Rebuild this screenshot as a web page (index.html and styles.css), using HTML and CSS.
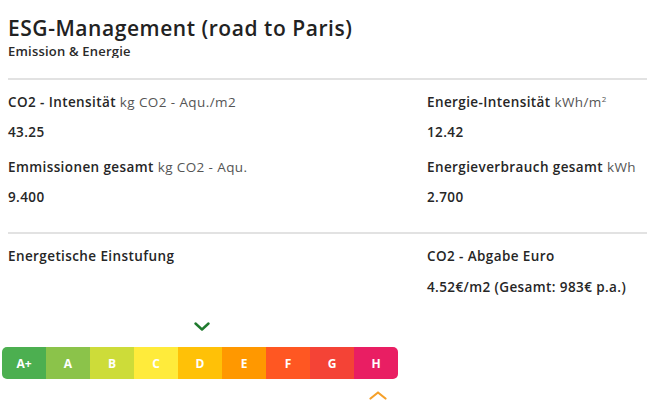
FILE: index.html
```html
<!DOCTYPE html>
<html lang="de">
<head>
<meta charset="utf-8">
<title>ESG-Management</title>
<link rel="stylesheet" href="styles.css">
</head>
<body>
<div class="card">
  <header class="head">
    <h1 class="title">ESG-Management (road to Paris)</h1>
    <div class="subtitle-clip"><h2 class="subtitle">Emission &amp; Energie</h2></div>
  </header>
  <div class="divider"></div>
  <section class="grid">
    <div class="col">
      <div class="label">CO2 - Intensität <span class="unit">kg CO2 - Aqu./m2</span></div>
      <div class="value">43.25</div>
      <div class="label">Emmissionen gesamt <span class="unit">kg CO2 - Aqu.</span></div>
      <div class="value">9.400</div>
    </div>
    <div class="col">
      <div class="label">Energie-Intensität <span class="unit">kWh/m<sup>2</sup></span></div>
      <div class="value">12.42</div>
      <div class="label">Energieverbrauch gesamt <span class="unit">kWh</span></div>
      <div class="value">2.700</div>
    </div>
  </section>
  <div class="divider divider-2"></div>
  <section class="grid grid-2">
    <div class="col">
      <div class="label">Energetische Einstufung</div>
    </div>
    <div class="col">
      <div class="label">CO2 - Abgabe Euro</div>
      <div class="value">4.52€/m2 (Gesamt: 983€ p.a.)</div>
    </div>
  </section>
  <div class="scale">
    <div class="marks marks-top">
      <span class="mark mark-d">
        <svg width="16" height="9" viewBox="0 0 16 9"><path d="M1.5 1.5 L8 7.5 L14.5 1.5" fill="none" stroke="#1f7a2e" stroke-width="2.4" stroke-linecap="round" stroke-linejoin="round"/></svg>
      </span>
    </div>
    <div class="bar">
      <span class="seg s-ap">A+</span>
      <span class="seg s-a">A</span>
      <span class="seg s-b">B</span>
      <span class="seg s-c">C</span>
      <span class="seg s-d">D</span>
      <span class="seg s-e">E</span>
      <span class="seg s-f">F</span>
      <span class="seg s-g">G</span>
      <span class="seg s-h">H</span>
    </div>
    <div class="marks marks-bottom">
      <span class="mark mark-h">
        <svg width="18" height="9" viewBox="0 0 18 9"><path d="M1.5 7.5 L9 1.5 L16.5 7.5" fill="none" stroke="#f5a02a" stroke-width="2.2" stroke-linecap="round" stroke-linejoin="round"/></svg>
      </span>
    </div>
  </div>
</div>
</body>
</html>
```

FILE: styles.css
```css
html, body {
  margin: 0;
  padding: 0;
  background: #ffffff;
}

body {
  font-family: "Open Sans", "Noto Sans", "Liberation Sans", sans-serif;
  color: #262626;
}

.card {
  width: 639px;
  padding: 15px 0 0 8px;
}

.title {
  margin: 0;
  font-size: 21px;
  font-weight: 600;
  line-height: 27px;
  color: #222;
  letter-spacing: 0.55px;
}

.subtitle-clip {
  height: 15px;
  overflow: hidden;
  margin-top: 1px;
}

.subtitle {
  margin: 0;
  font-size: 13px;
  font-weight: 600;
  line-height: 16px;
  color: #2a2a2a;
  letter-spacing: 0.2px;
}

.divider {
  height: 2px;
  background: #e2e2e2;
  margin-top: 20px;
}

.divider-2 {
  margin-top: 8px;
}

.grid {
  display: grid;
  grid-template-columns: 419px 1fr;
  padding-top: 14px;
}

.grid-2 {
  padding-top: 14px;
}

.col {
  display: flex;
  flex-direction: column;
}

.label, .value {
  font-size: 13.5px;
  font-weight: 600;
  line-height: 17px;
  color: #262626;
  white-space: nowrap;
  letter-spacing: 0.4px;
}

.label {
  margin-bottom: 13px;
}

.grid-2 .label {
  margin-bottom: 14px;
}

.value {
  margin-bottom: 18px;
}

.unit {
  font-weight: 400;
  color: #555;
}

.unit sup {
  font-size: 8px;
  line-height: 0;
}

.scale {
  margin-left: -6px;
  width: 396px;
}

.marks {
  display: grid;
  grid-template-columns: repeat(9, 44px);
}

.marks-top {
  margin-top: 8px;
  height: 25px;
  align-items: start;
}

.marks-bottom {
  align-items: start;
  padding-top: 12px;
  height: 12px;
}

.mark {
  display: flex;
  justify-content: center;
  line-height: 0;
}

.mark-d {
  grid-column: 5;
  padding-left: 3px;
}

.mark-h {
  grid-column: 9;
  padding-left: 3px;
}

.bar {
  display: grid;
  grid-template-columns: repeat(9, 44px);
  height: 32px;
  border-radius: 5px;
  overflow: hidden;
}

.seg {
  display: flex;
  align-items: center;
  justify-content: center;
  color: #fff;
  font-size: 12px;
  font-weight: 700;
}

.s-ap { background: #4caf50; }
.s-a  { background: #8bc34a; }
.s-b  { background: #cddc39; }
.s-c  { background: #ffeb3b; }
.s-d  { background: #ffc107; }
.s-e  { background: #ff9800; }
.s-f  { background: #ff5722; }
.s-g  { background: #f44336; }
.s-h  { background: #e91e63; }
```
